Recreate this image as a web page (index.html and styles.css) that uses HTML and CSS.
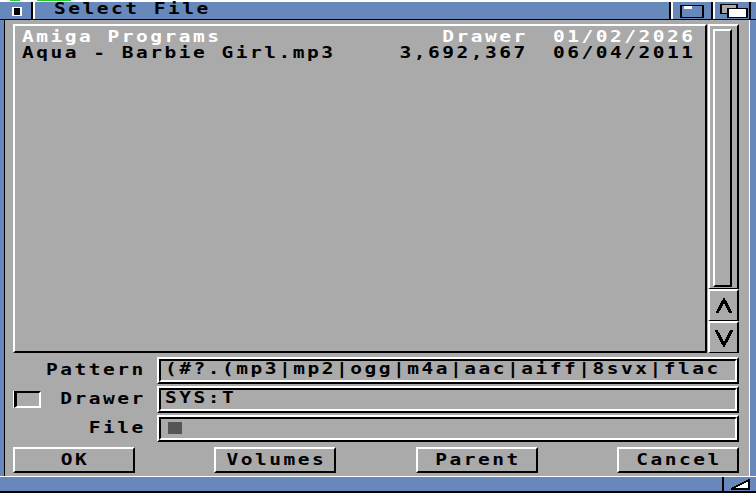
FILE: index.html
```html
<!DOCTYPE html>
<html lang="en">
<head>
  <meta charset="UTF-8">
  <title>Select File</title>
  <link rel="stylesheet" href="styles.css">
</head>
<body>
  <div class="window">
    <div class="screenbar"><span class="spot s1"></span><span class="spot s2"></span></div>
    <div class="titlebar">
      <div class="gadget close"><span class="close-icon"></span></div>
      <div class="dragbar"><span class="t">Select File</span></div>
      <div class="gadget zoom">
        <svg width="24" height="13" shape-rendering="crispEdges">
          <rect x="0" y="0" width="24" height="13" fill="#000"/>
          <rect x="2" y="1" width="20" height="11" fill="#6688bb"/>
          <rect x="4" y="1" width="8" height="3" fill="#fff"/>
        </svg>
      </div>
      <div class="gadget depth">
        <svg width="28" height="14" shape-rendering="crispEdges">
          <rect x="0" y="0" width="18" height="10" fill="#000"/>
          <rect x="2" y="1" width="14" height="8" fill="#aaaaaa"/>
          <rect x="7" y="4" width="21" height="10" fill="#000"/>
          <rect x="9" y="5" width="17" height="8" fill="#fff"/>
        </svg>
      </div>
      <div class="titlebar-end"></div>
    </div>

    <div class="frame">
      <div class="content">
        <div class="browser">
          <div class="list">
            <div class="entry dir">
              <span class="name"><span class="t">Amiga Programs</span></span>
              <span class="size"><span class="t r">Drawer</span></span>
              <span class="date"><span class="t">01/02/2026</span></span>
            </div>
            <div class="entry">
              <span class="name"><span class="t">Aqua - Barbie Girl.mp3</span></span>
              <span class="size"><span class="t r">3,692,367</span></span>
              <span class="date"><span class="t">06/04/2011</span></span>
            </div>
          </div>
          <div class="scroller">
            <div class="prop"><div class="knob"></div></div>
            <div class="arrow">
              <svg width="16" height="16" shape-rendering="crispEdges">
                <polyline points="1,15 8,2 15,15" fill="none" stroke="#000" stroke-width="3"/>
              </svg>
            </div>
            <div class="arrow">
              <svg width="18" height="18" shape-rendering="crispEdges">
                <polyline points="1,1 9,16 17,1" fill="none" stroke="#000" stroke-width="3"/>
              </svg>
            </div>
          </div>
        </div>

        <div class="fields">
          <span></span>
          <span class="label"><span class="t r">Pattern</span></span>
          <div class="string"><div class="string-inner"><span class="t">(#?.(mp3|mp2|ogg|m4a|aac|aiff|8svx|flac</span></div></div>

          <span class="checkbox"></span>
          <span class="label"><span class="t r">Drawer</span></span>
          <div class="string"><div class="string-inner"><span class="t">SYS:T</span></div></div>

          <span></span>
          <span class="label"><span class="t r">File</span></span>
          <div class="string"><div class="string-inner"><span class="cursor"></span></div></div>
        </div>

        <div class="buttons">
          <button type="button"><span class="t c">OK</span></button>
          <button type="button"><span class="t c">Volumes</span></button>
          <button type="button"><span class="t c">Parent</span></button>
          <button type="button"><span class="t c">Cancel</span></button>
        </div>
      </div>
    </div>

    <div class="bottombar">
      <div class="sizer">
        <svg width="20" height="11" shape-rendering="crispEdges">
          <polygon points="1,10 19,1 19,10" fill="#fff" stroke="#000" stroke-width="2"/>
        </svg>
      </div>
    </div>
  </div>
</body>
</html>
```

FILE: styles.css
```css
body {
  margin: 0;
  background-color: #aaaaaa;
  font-family: "DejaVu Sans Mono", "Liberation Mono", monospace;
  font-size: 15px;
  font-weight: bold;
  letter-spacing: 1.93px;
  color: #000;
}
/* the Amiga font is wide: stretch the glyphs instead of spacing them out */
.t {
  display: inline-block;
  white-space: pre;
  transform: scaleX(1.3);
  transform-origin: left center;
}
.t.r {
  transform-origin: right center;
}
.t.c {
  transform-origin: center center;
}
.window {
  width: 756px;
  height: 493px;
  overflow: hidden;
  display: flex;
  flex-direction: column;
}
.screenbar {
  height: 1px;
  background-color: #fff;
  display: flex;
}
.spot {
  height: 1px;
  background-color: #22cc22;
}
.s1 {
  width: 10px;
  margin-left: 10px;
}
.s2 {
  width: 34px;
  margin-left: 17px;
}
.titlebar {
  height: 20px;
  box-sizing: border-box;
  display: flex;
  background-color: #6688bb;
  border-top: 1px solid #fff;
  border-bottom: 1px solid #000;
}
.gadget {
  box-sizing: border-box;
  border-left: 2px solid #fff;
  border-right: 2px solid #000;
}
.close {
  width: 33px;
  border-left: none;
  padding: 5px 0 0 12px;
}
.close-icon {
  display: block;
  width: 6px;
  height: 7px;
  background-color: #000;
  border: 2px solid #fff;
  border-width: 1px 2px;
}
.dragbar {
  width: 638px;
  box-sizing: border-box;
  border-left: 2px solid #fff;
  border-right: 2px solid #000;
  padding-left: 19px;
  line-height: 15px;
  white-space: nowrap;
}
.zoom {
  width: 42px;
  padding: 3px 0 0 7px;
}
.depth {
  width: 38px;
  padding: 2px 0 0 5px;
}
.gadget svg {
  display: block;
}
.titlebar-end {
  flex: 1;
}
.frame {
  height: 456px;
  display: flex;
  background-color: #6688bb;
  padding: 0 6px 0 4px;
}
.content {
  width: 744px;
  background-color: #aaaaaa;
  border-left: 1px solid #000;
  border-right: 1px solid #fff;
  padding: 4px 10px 3px 8px;
  display: flex;
  flex-direction: column;
}
.browser {
  height: 329px;
  flex: none;
  display: flex;
  gap: 1px;
}
.list {
  flex: 1;
  border-top: 2px solid #fff;
  border-left: 2px solid #fff;
  border-right: 2px solid #000;
  border-bottom: 2px solid #000;
  padding: 3px 11px 0 7px;
  line-height: 16px;
}
.entry {
  display: flex;
  white-space: nowrap;
}
.entry.dir {
  color: #fff;
}
.name {
  flex: 1;
}
.size {
  width: 130px;
  text-align: right;
}
.date {
  width: 141px;
  margin-left: 25px;
}
.scroller {
  width: 31px;
  display: flex;
  flex-direction: column;
}
.prop {
  flex: 1;
  border-top: 2px solid #fff;
  border-left: 2px solid #fff;
  border-right: 2px solid #000;
  border-bottom: 1px solid #000;
  padding: 3px 5px 1px 3px;
  display: flex;
}
.knob {
  flex: 1;
  border-top: 2px solid #fff;
  border-left: 2px solid #fff;
  border-right: 2px solid #000;
  border-bottom: 2px solid #000;
}
.arrow {
  height: 32px;
  box-sizing: border-box;
  border-top: 2px solid #fff;
  border-left: 2px solid #fff;
  border-right: 2px solid #000;
  border-bottom: 1px solid #000;
  display: flex;
  align-items: center;
  justify-content: center;
}
.arrow svg {
  display: block;
}
.fields {
  margin-top: 4px;
  display: grid;
  grid-template-columns: 28px 116px 582px;
  grid-auto-rows: 27px;
  row-gap: 2px;
  align-items: center;
}
.label {
  text-align: right;
  padding-right: 11px;
  line-height: 15px;
}
.checkbox {
  width: 27px;
  height: 17px;
  margin-left: 1px;
  box-sizing: border-box;
  border-top: 2px solid #000;
  border-left: 3px solid #000;
  border-right: 2px solid #fff;
  border-bottom: 2px solid #fff;
  box-shadow: -1px 0 0 #fff;
}
.string {
  height: 27px;
  box-sizing: border-box;
  border-top: 2px solid #fff;
  border-left: 2px solid #fff;
  border-right: 2px solid #000;
  border-bottom: 2px solid #000;
}
.string-inner {
  height: 100%;
  box-sizing: border-box;
  border-top: 2px solid #000;
  border-left: 2px solid #000;
  border-right: 2px solid #fff;
  border-bottom: 2px solid #fff;
  padding: 1px 0 0 4px;
  line-height: 15px;
  white-space: nowrap;
  overflow: hidden;
}
.cursor {
  display: block;
  width: 14px;
  height: 12px;
  margin: 2px 0 0 3px;
  background-color: #555;
}
.buttons {
  margin-top: 5px;
  display: flex;
  justify-content: space-between;
}
button {
  width: 122px;
  height: 26px;
  margin: 0;
  padding: 0 0 0 2px;
  font: inherit;
  letter-spacing: inherit;
  color: #000;
  background-color: #aaaaaa;
  border-top: 2px solid #fff;
  border-left: 2px solid #fff;
  border-right: 2px solid #000;
  border-bottom: 2px solid #000;
  line-height: 15px;
  text-align: center;
}
.bottombar {
  height: 17px;
  flex: none;
  box-sizing: border-box;
  background-color: #6688bb;
  border-top: 1px solid #fff;
  border-bottom: 2px solid #000;
  display: flex;
  justify-content: flex-end;
  padding-right: 6px;
}
.sizer {
  width: 28px;
  border-left: 2px solid #000;
  padding: 2px 0 0 6px;
  box-sizing: border-box;
}
.sizer svg {
  display: block;
}
```
